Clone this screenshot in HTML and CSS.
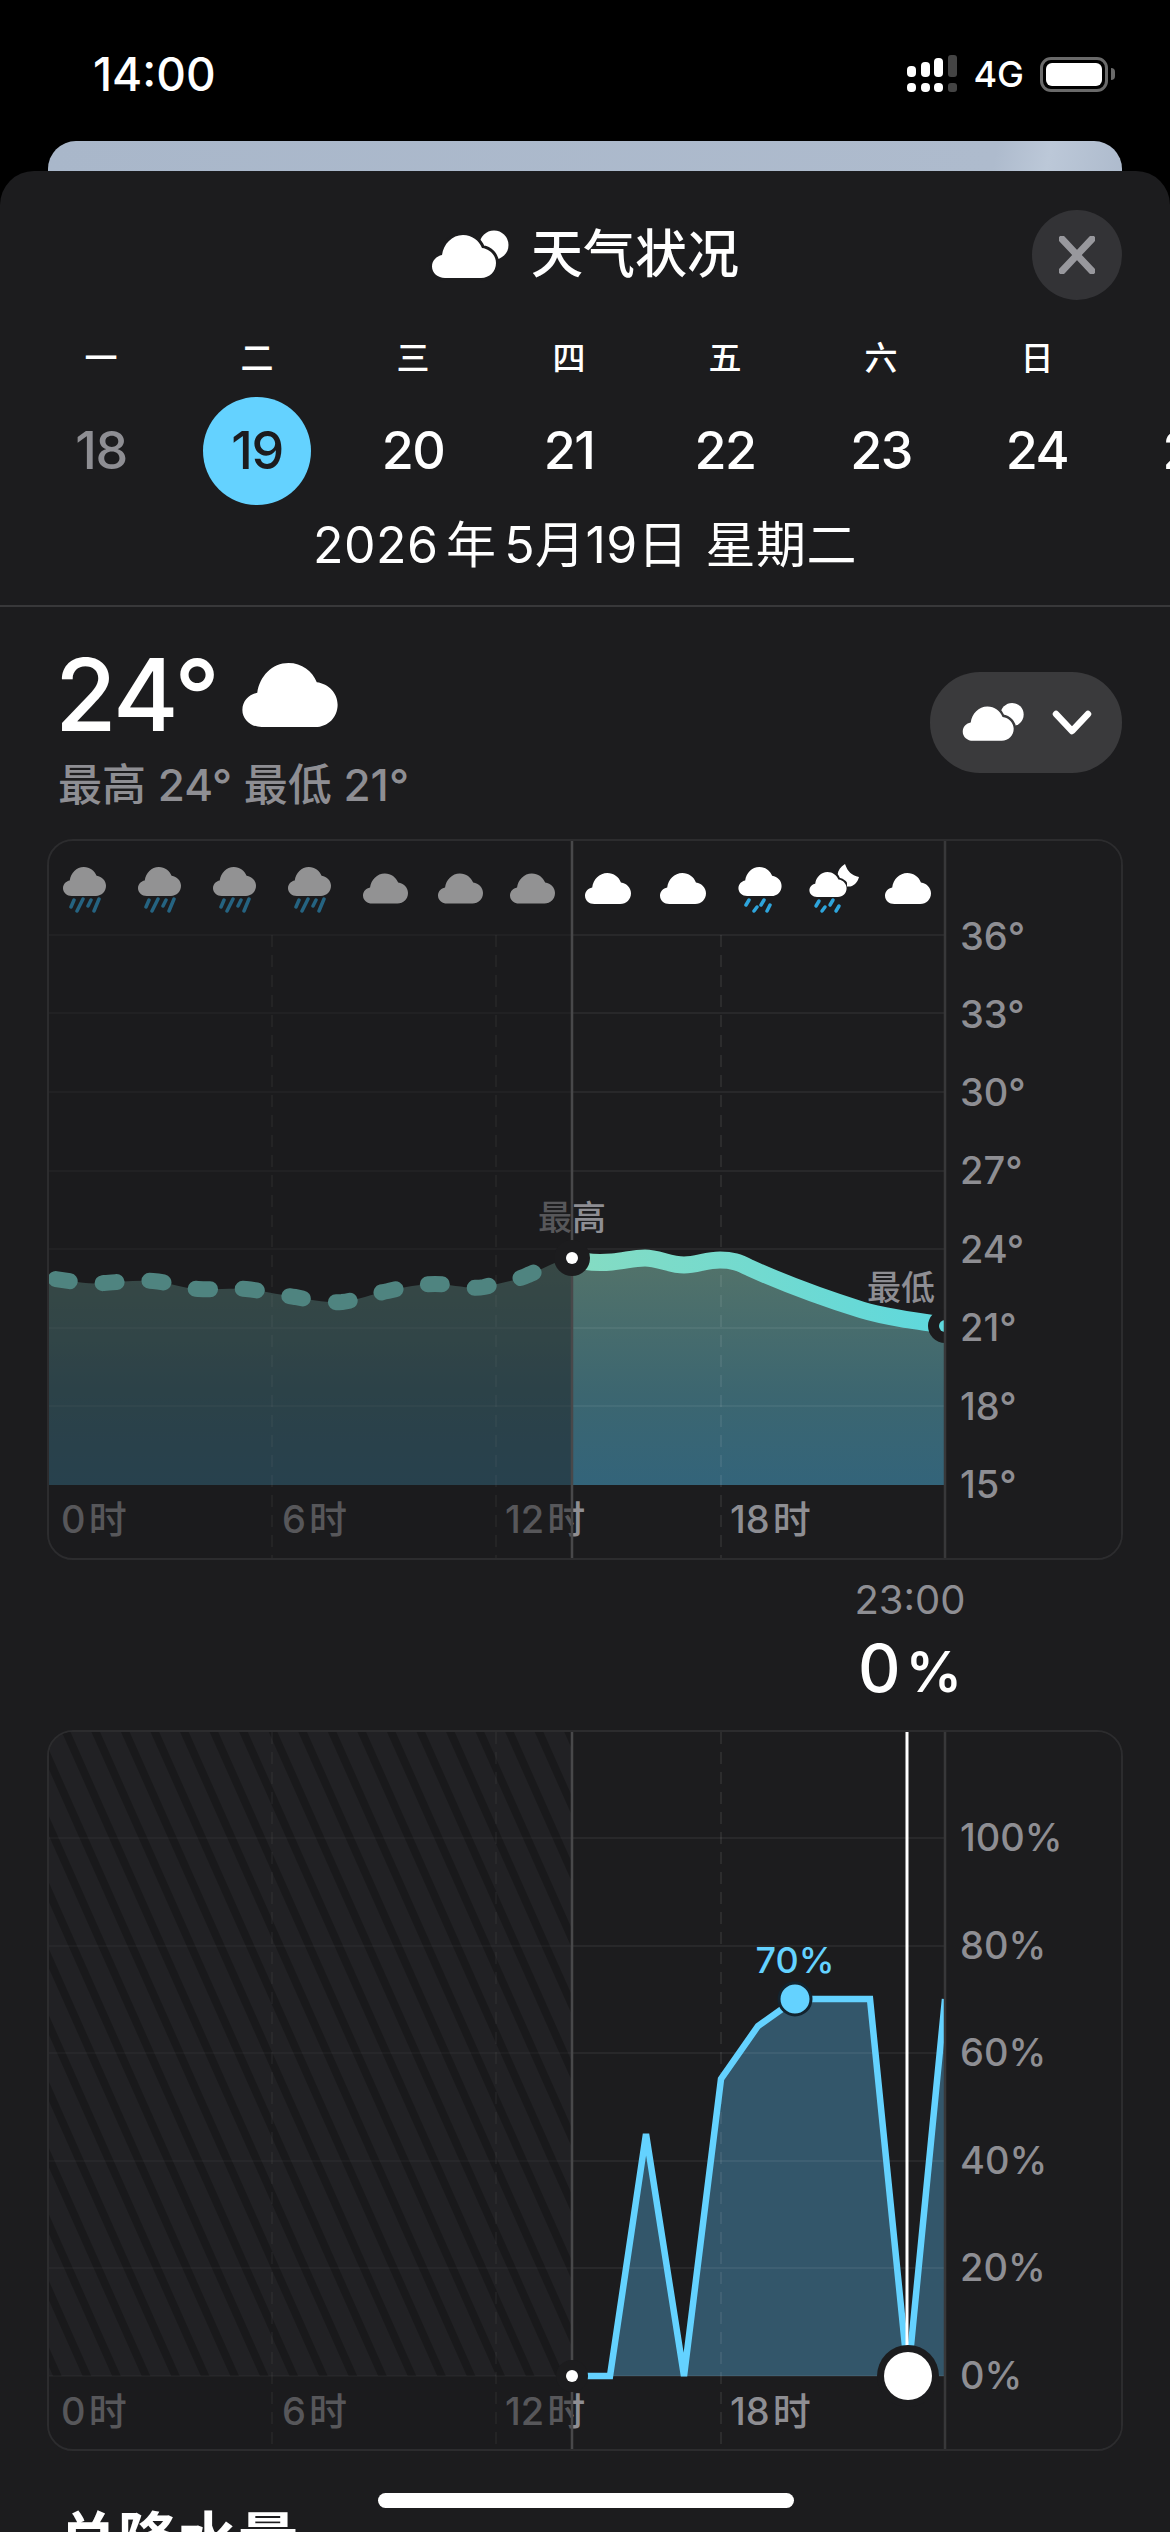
FILE: index.html
```html
<!DOCTYPE html>
<html lang="zh-CN">
<head>
  <meta charset="UTF-8">
  <title>天气状况</title>
  <link rel="stylesheet" href="styles.css">
</head>
<body>

<svg class="defs" width="0" height="0">
  <symbol id="cloud" viewBox="0 0 64 43">
    <path d="M13 43C5.8 43 0 38 0 31.5C0 25.5 4.5 21 10 20C11.5 9 20 0 31 0C40 0 47 5.5 50 13C58 14 64 20.5 64 28C64 36.5 57.5 43 49 43Z"/>
  </symbol>
  <symbol id="partly" viewBox="-3 -3 82 54">
    <circle cx="62" cy="14" r="14.5" stroke="none"/>
    <path class="cloud-cut" d="M13 47C5.8 47 0 42 0 35.5C0 29.5 4.5 25 10 24C11.5 13 20 4 31 4C40 4 47 9.5 50 17C58 18 64 24.5 64 32C64 40.5 57.5 47 49 47Z"/>
  </symbol>
</svg>

<div class="status">
  <span class="time">14:00</span>
  <div class="status-right">
    <svg class="signal" width="50" height="38" viewBox="0 0 50 38">
      <rect x="0" y="11" width="9" height="11" rx="4"/>
      <rect x="14" y="7" width="9" height="15" rx="4"/>
      <rect x="27" y="3" width="9" height="19" rx="4"/>
      <rect class="off" x="41" y="0" width="9" height="22" rx="3"/>
      <rect x="0" y="28" width="9" height="9" rx="4"/>
      <rect x="14" y="28" width="9" height="9" rx="4"/>
      <rect x="27" y="28" width="9" height="9" rx="4"/>
      <rect class="off" x="41" y="28" width="9" height="9" rx="3"/>
    </svg>
    <span class="net">4G</span>
    <div class="battery"><div class="battery-fill"></div></div>
    <div class="battery-nub"></div>
  </div>
</div>

<div class="peek"></div>

<div class="sheet">
  <div class="head">
    <span></span>
    <h1 class="title">
      <svg class="title-icon" width="82" height="54"><use href="#partly"/></svg>
      天气状况
    </h1>
    <div class="close">
      <svg width="36" height="38" viewBox="0 0 36 38"><path d="M3 3L33 35M33 3L3 35"/></svg>
    </div>
  </div>

  <div class="week">
    <span class="wd">一</span><span class="wd">二</span><span class="wd">三</span><span class="wd">四</span><span class="wd">五</span><span class="wd">六</span><span class="wd">日</span><span class="wd"></span>
    <span class="day past">18</span><span class="day today">19</span><span class="day">20</span><span class="day">21</span><span class="day">22</span><span class="day">23</span><span class="day">24</span><span class="day">25</span>
  </div>

  <div class="date">2026 年 5月19日 &thinsp;星期二</div>

  <div class="summary">
    <div>
      <div class="temp">24° <svg class="temp-icon" width="96" height="64"><use href="#cloud"/></svg></div>
      <div class="range">最高 24° 最低 21°</div>
    </div>
    <div class="pill">
      <svg class="pill-icon" width="66" height="43" viewBox="-3 -3 82 54"><use href="#partly" x="-3" y="-3" width="82" height="54"/></svg>
      <svg class="chev" width="40" height="26" viewBox="0 0 40 26"><path d="M4 4L20 21L36 4"/></svg>
    </div>
  </div>

  <!-- temperature -->
  <div class="chart">
    <svg width="1072" height="717" viewBox="49 841 1072 717">
      <defs>
        <linearGradient id="tempFill" gradientUnits="userSpaceOnUse" x1="0" y1="1258" x2="0" y2="1485">
          <stop offset="0" stop-color="#53736a"/>
          <stop offset="0.6" stop-color="#3c6670"/>
          <stop offset="1" stop-color="#33647a"/>
        </linearGradient>
        <linearGradient id="tempLine" gradientUnits="userSpaceOnUse" x1="48" y1="0" x2="945" y2="0">
          <stop offset="0.58" stop-color="#86dcc2"/>
          <stop offset="1" stop-color="#5ed8dd"/>
        </linearGradient>
      </defs>

      <path class="area-temp" d="M48 1278C65 1280 85 1285 104 1283C120 1282 135 1280 153 1281C168 1282 180 1288 198 1289C215 1290 230 1288 246 1289C265 1291 280 1295 295 1297C310 1300 328 1303 342 1302C358 1300 372 1294 388 1291C405 1287 420 1284 435 1284C452 1284 470 1290 484 1287C500 1283 515 1281 528 1275C545 1268 558 1260 572 1258C585 1263 600 1263 612 1262C625 1261 633 1258 645 1258C658 1258 670 1265 684 1265C697 1265 706 1260 720 1260C732 1260 738 1262 750 1268C790 1286 830 1300 862 1310C885 1317 915 1321 945 1325L945 1485L48 1485Z"/>

      <path class="grid" d="M48 935H945M48 1013H945M48 1092H945M48 1171H945M48 1249H945M48 1328H945M48 1406H945"/>
      <path class="grid-dash" d="M272 935V1558M496 935V1558M721 935V1558"/>

      <path class="line-past" d="M48 1278C65 1280 85 1285 104 1283C120 1282 135 1280 153 1281C168 1282 180 1288 198 1289C215 1290 230 1288 246 1289C265 1291 280 1295 295 1297C310 1300 328 1303 342 1302C358 1300 372 1294 388 1291C405 1287 420 1284 435 1284C452 1284 470 1290 484 1287C500 1283 515 1281 528 1275C545 1268 558 1260 572 1258"/>
      <path class="line-now" d="M572 1258C585 1263 600 1263 612 1262C625 1261 633 1258 645 1258C658 1258 670 1265 684 1265C697 1265 706 1260 720 1260C732 1260 738 1262 750 1268C790 1286 830 1300 862 1310C885 1317 915 1321 945 1325"/>

      <use class="ic" href="#cloud" x="63" y="867" width="43" height="29"/>
      <use class="ic" href="#cloud" x="138" y="867" width="43" height="29"/>
      <use class="ic" href="#cloud" x="213" y="867" width="43" height="29"/>
      <use class="ic" href="#cloud" x="288" y="867" width="43" height="29"/>
      <path class="drops" d="M74 900L71 907M83 899L77 911M91 900L88 906M99 899L94 911M149 900L146 907M158 899L152 911M166 900L163 906M174 899L169 911M224 900L221 907M233 899L227 911M241 900L238 906M249 899L244 911M299 900L296 907M308 899L302 911M316 900L313 906M324 899L319 911"/>
      <use class="ic" href="#cloud" x="363" y="873" width="45" height="31"/>
      <use class="ic" href="#cloud" x="438" y="873" width="45" height="31"/>
      <use class="ic" href="#cloud" x="510" y="873" width="45" height="31"/>

      <use class="ic" href="#cloud" x="585" y="873" width="46" height="31"/>
      <use class="ic" href="#cloud" x="660" y="873" width="46" height="31"/>
      <use class="ic" href="#cloud" x="738" y="867" width="44" height="29"/>
      <path class="drops" d="M749 900L746 905M757 907L754 911M764 900L761 905M770 905L767 911"/>
      <path class="ic moon" d="M845 864C848 872 851 875 859 877C857 885 850 889 843 885C835 880 836 869 845 864Z"/>
      <use class="ic cut" href="#cloud" x="809" y="872" width="38" height="25"/>
      <path class="drops" d="M819 901L816 906M825 907L822 911M833 900L830 905M839 906L836 911"/>
      <use class="ic" href="#cloud" x="885" y="873" width="46" height="31"/>

      <text class="peak" x="572" y="1230">最高</text>
      <text class="xlabel" x="61" y="1533">0 时</text>
      <text class="xlabel" x="282" y="1533">6 时</text>
      <text class="xlabel" x="505" y="1533">12 时</text>
      <text class="xlabel" x="730" y="1533">18 时</text>

      <rect class="dim" x="47" y="841" width="525" height="717"/>

      <path class="line-now-v" d="M572 841V1558"/>
      <text class="peak" x="901" y="1300">最低</text>
      <circle class="ring" cx="945" cy="1326" r="17"/>
      <circle class="dot-low" cx="945" cy="1326" r="6"/>
      <circle class="ring" cx="572" cy="1258" r="18"/>
      <circle class="dot" cx="572" cy="1258" r="6"/>

      <rect class="side" x="946" y="841" width="180" height="717"/>
      <path class="line-side" d="M945 841V1558"/>
      <text class="ylabel" x="960" y="950">36°</text>
      <text class="ylabel" x="960" y="1028">33°</text>
      <text class="ylabel" x="960" y="1106">30°</text>
      <text class="ylabel" x="960" y="1184">27°</text>
      <text class="ylabel" x="960" y="1263">24°</text>
      <text class="ylabel" x="960" y="1341">21°</text>
      <text class="ylabel" x="960" y="1420">18°</text>
      <text class="ylabel" x="960" y="1498">15°</text>
    </svg>
  </div>

  <div class="readout">
    <div class="readout-time">23:00</div>
    <div class="readout-val">0<span class="pct">%</span></div>
  </div>

  <!-- precipitation -->
  <div class="chart">
    <svg width="1072" height="717" viewBox="49 1732 1072 717">
      <defs>
        <pattern id="hatch" width="27" height="27" patternUnits="userSpaceOnUse" patternTransform="rotate(-24)">
          <rect width="27" height="27" fill="#28282b"/>
          <rect width="8" height="27" fill="#18181a"/>
        </pattern>
      </defs>

      <rect x="47" y="1732" width="525" height="644" fill="url(#hatch)"/>
      <path class="area-rain" d="M572 2376H610L646 2134L684 2376L721 2079L758 2026L796 1999H870L908 2376L945 1999V2376Z"/>

      <path class="grid" d="M48 1838H945M48 1946H945M48 2053H945M48 2161H945M48 2268H945M48 2376H945"/>
      <path class="grid-dash" d="M272 1732V2449M496 1732V2449M721 1732V2449"/>

      <text class="xlabel" x="61" y="2425">0 时</text>
      <text class="xlabel" x="282" y="2425">6 时</text>
      <text class="xlabel" x="505" y="2425">12 时</text>
      <text class="xlabel" x="730" y="2425">18 时</text>

      <rect class="dim" x="47" y="1732" width="525" height="717"/>

      <path class="line-rain" d="M572 2376H610L646 2134L684 2376L721 2079L758 2026L796 1999H870L908 2376L945 1999"/>
      <path class="line-now-v" d="M572 1732V2449"/>
      <path class="cursor" d="M907 1732V2376"/>

      <text class="rain-peak" x="795" y="1973">70%</text>
      <circle class="ring-blue" cx="795" cy="1999" r="16"/>
      <circle class="ring" cx="572" cy="2376" r="16"/>
      <circle class="dot" cx="572" cy="2376" r="6"/>
      <circle class="ring" cx="908" cy="2376" r="31"/>
      <circle class="dot" cx="908" cy="2376" r="24"/>

      <rect class="side" x="946" y="1732" width="180" height="717"/>
      <path class="line-side" d="M945 1732V2449"/>
      <text class="ylabel" x="960" y="1851">100%</text>
      <text class="ylabel" x="960" y="1959">80%</text>
      <text class="ylabel" x="960" y="2066">60%</text>
      <text class="ylabel" x="960" y="2174">40%</text>
      <text class="ylabel" x="960" y="2281">20%</text>
      <text class="ylabel" x="960" y="2389">0%</text>
    </svg>
  </div>

  <h2 class="next">总降水量</h2>
</div>

<div class="home"></div>

</body>
</html>
```

FILE: styles.css
```css
* {
  box-sizing: border-box;
}
html, body {
  margin: 0;
  height: 2532px;
  overflow: hidden;
}
body {
  position: relative;
  background: #000;
  color: #fff;
  font-family: Inter, "Noto Sans CJK SC", sans-serif;
}
.defs {
  display: block;
}

/* status bar */
.status {
  height: 141px;
  display: flex;
  justify-content: space-between;
  padding: 48px 55px 0 93px;
}
.time {
  font-size: 46px;
  line-height: 52px;
  font-weight: 500;
}
.status-right {
  display: flex;
  align-items: center;
  height: 52px;
}
.signal {
  fill: #fff;
  margin-right: 16px;
}
.signal .off {
  fill: #444;
}
.net {
  font-size: 36px;
  font-weight: 500;
  margin-right: 16px;
}
.battery {
  width: 68px;
  height: 35px;
  border: 3px solid #6a6a6a;
  border-radius: 11px;
  padding: 3px;
}
.battery-fill {
  height: 100%;
  background: #fff;
  border-radius: 6px;
}
.battery-nub {
  width: 4px;
  height: 12px;
  margin-left: 3px;
  background: #6a6a6a;
  border-radius: 0 4px 4px 0;
}

.peek {
  height: 30px;
  margin: 0 48px;
  border-radius: 28px 28px 0 0;
  background: linear-gradient(100deg, #a9b7ca 0%, #aebbcd 88%, #bcc8d8 93%, #aebbcd 100%);
}

/* sheet */
.sheet {
  height: 2361px;
  background: #1c1c1e;
  border-radius: 34px 34px 0 0;
  overflow: hidden;
}
.head {
  display: grid;
  grid-template-columns: 1fr auto 1fr;
  align-items: center;
  padding: 39px 48px 0;
}
.title {
  display: flex;
  align-items: center;
  gap: 20px;
  margin: 0 0 0 -2px;
  font-size: 52px;
  line-height: 90px;
  font-weight: 500;
}
.title-icon {
  fill: #fff;
  stroke: #1c1c1e;
}
.cloud-cut {
  stroke-width: 6;
  paint-order: stroke;
}
.close {
  justify-self: end;
  width: 90px;
  height: 90px;
  border-radius: 50%;
  background: #333336;
  display: flex;
  align-items: center;
  justify-content: center;
}
.close path {
  fill: none;
  stroke: #98989d;
  stroke-width: 7;
  stroke-linecap: round;
}

.week {
  display: grid;
  grid-template-columns: repeat(8, 156px);
  grid-template-rows: 36px 108px;
  row-gap: 21px;
  margin-top: 40px;
  padding-left: 23px;
}
.wd {
  text-align: center;
  font-size: 33px;
  line-height: 36px;
  font-weight: 500;
}
.day {
  justify-self: center;
  width: 108px;
  height: 108px;
  border-radius: 50%;
  text-align: center;
  font-size: 52px;
  line-height: 108px;
  font-weight: 450;
  letter-spacing: -1.5px;
}
.day.past {
  color: #8e8e93;
}
.day.today {
  background: #64d2ff;
  color: #1c1c1e;
}
.date {
  height: 102px;
  padding-top: 7px;
  text-align: center;
  font-size: 50px;
  line-height: 66px;
  letter-spacing: 0.5px;
  word-spacing: -7px;
  border-bottom: 2px solid #38383a;
}

.summary {
  display: flex;
  justify-content: space-between;
  align-items: flex-start;
  padding: 38px 48px 0 58px;
}
.temp {
  display: flex;
  align-items: center;
  gap: 24px;
  height: 100px;
  margin-left: -3px;
  font-size: 100px;
  line-height: 100px;
  font-weight: 500;
  letter-spacing: -2px;
}
.temp-icon {
  fill: #fff;
}
.range {
  margin-top: 15px;
  font-size: 44px;
  line-height: 50px;
  font-weight: 500;
  color: #8e8e93;
}
.pill {
  width: 192px;
  height: 101px;
  margin-top: 27px;
  border-radius: 50px;
  background: #3a3a3c;
  display: flex;
  align-items: center;
  justify-content: center;
  gap: 26px;
}
.pill-icon {
  fill: #fff;
  stroke: #3a3a3c;
}
.chev path {
  fill: none;
  stroke: #fff;
  stroke-width: 6.5;
  stroke-linecap: round;
  stroke-linejoin: round;
}

/* charts */
.chart {
  width: 1076px;
  height: 721px;
  margin: 29px 47px 0;
  border: 2px solid #2c2c2e;
  border-radius: 26px;
  overflow: hidden;
}
.chart svg {
  display: block;
}
.readout + .chart {
  margin-top: 0;
}
.area-temp {
  fill: url(#tempFill);
}
.area-rain {
  fill: #33566a;
}
.grid {
  fill: none;
  stroke: #fff;
  stroke-opacity: 0.055;
  stroke-width: 2;
}
.grid-dash {
  fill: none;
  stroke: #fff;
  stroke-opacity: 0.07;
  stroke-width: 2;
  stroke-dasharray: 12 8;
}
.line-past {
  fill: none;
  stroke: #7fe4da;
  stroke-width: 16;
  stroke-linecap: round;
  stroke-dasharray: 14 33;
  stroke-dashoffset: -8;
}
.line-now {
  fill: none;
  stroke: url(#tempLine);
  stroke-width: 17;
}
.ic {
  fill: #fff;
}
.ic.cut {
  stroke: #1c1c1e;
  stroke-width: 7;
  paint-order: stroke;
}
.drops {
  fill: none;
  stroke: #2ea5dc;
  stroke-width: 3.5;
  stroke-linecap: round;
}
.dim {
  fill: #1c1c1e;
  fill-opacity: 0.48;
}
.line-now-v, .line-side {
  fill: none;
  stroke: #48484a;
  stroke-width: 2.5;
}
.line-side {
  stroke: #38383a;
}
.ring {
  fill: #1c1c1e;
}
.dot {
  fill: #fff;
}
.dot-low {
  fill: #5ed8dd;
}
.side {
  fill: #1c1c1e;
}
.peak {
  font-size: 34px;
  font-weight: 500;
  fill: #8e8e93;
  text-anchor: middle;
}
.xlabel {
  font-size: 38px;
  font-weight: 500;
  fill: #8e8e93;
  word-spacing: -7px;
}
.ylabel {
  font-size: 38px;
  font-weight: 500;
  fill: #8e8e93;
}
.line-rain {
  fill: none;
  stroke: #64d2ff;
  stroke-width: 6.5;
  stroke-linejoin: miter;
}
.cursor {
  fill: none;
  stroke: #fff;
  stroke-width: 3;
}
.rain-peak {
  font-size: 36px;
  font-weight: 500;
  fill: #64d2ff;
  text-anchor: middle;
}
.ring-blue {
  fill: #64d2ff;
  stroke: #13232e;
  stroke-width: 3;
}

.readout {
  width: 200px;
  height: 170px;
  margin-left: 810px;
  display: flex;
  flex-direction: column;
  align-items: center;
}
.readout-time {
  margin-top: 20px;
  font-size: 40px;
  line-height: 40px;
  color: #8e8e93;
}
.readout-val {
  margin-top: 12px;
  font-size: 66px;
  line-height: 72px;
  font-weight: 500;
}
.pct {
  font-size: 56px;
  font-weight: 600;
  margin-left: 5px;
}

.next {
  margin: 54px 0 0 58px;
  font-size: 60px;
  line-height: 70px;
  font-weight: 700;
}

.home {
  position: absolute;
  left: 378px;
  top: 2493px;
  width: 416px;
  height: 15px;
  border-radius: 8px;
  background: #fff;
}
```
